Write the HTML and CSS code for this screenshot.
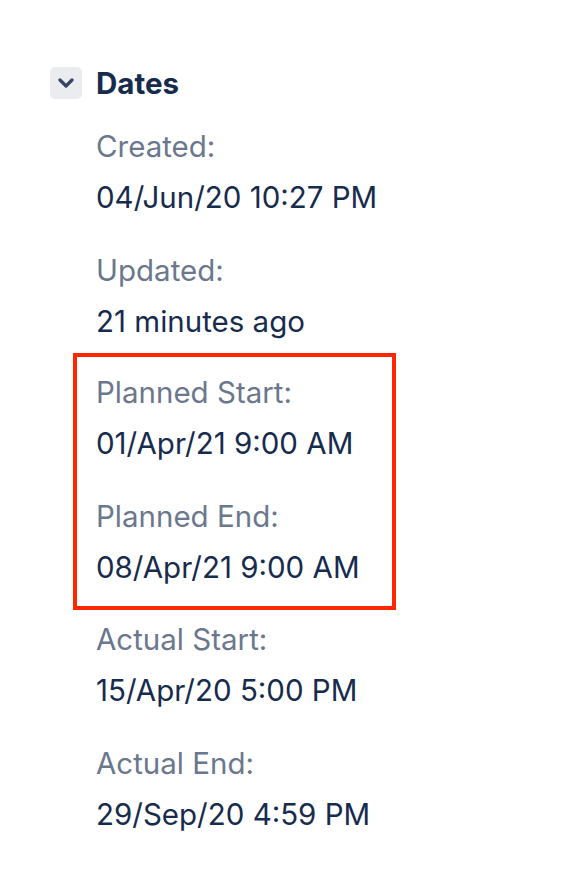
FILE: index.html
```html
<!DOCTYPE html>
<html lang="en">
<head>
  <meta charset="UTF-8" />
  <meta name="viewport" content="width=device-width, initial-scale=1.0"/>
  <title>Dates</title>
  <link rel="stylesheet" href="styles.css">
</head>
<body>
  <div class="panel">
    <div class="panel-header">
      <span class="toggle">
        <svg width="16" height="10" viewBox="0 0 16 10">
          <path d="M2 2 L8 8 L14 2" fill="none" stroke="#344563" stroke-width="3.2" stroke-linecap="round" stroke-linejoin="round"/>
        </svg>
      </span>
      <h2>Dates</h2>
    </div>

    <div class="fields">
      <div class="field">
        <div class="label">Created:</div>
        <div class="value">04/Jun/20 10:27 PM</div>
      </div>
      <div class="field">
        <div class="label">Updated:</div>
        <div class="value">21 minutes ago</div>
      </div>

      <div class="highlight">
        <div class="field">
          <div class="label">Planned Start:</div>
          <div class="value">01/Apr/21 9:00 AM</div>
        </div>
        <div class="field">
          <div class="label">Planned End:</div>
          <div class="value">08/Apr/21 9:00 AM</div>
        </div>
      </div>

      <div class="field">
        <div class="label">Actual Start:</div>
        <div class="value">15/Apr/20 5:00 PM</div>
      </div>
      <div class="field">
        <div class="label">Actual End:</div>
        <div class="value">29/Sep/20 4:59 PM</div>
      </div>
    </div>
  </div>
</body>
</html>
```

FILE: styles.css
```css
body {
  margin: 0;
  background: #ffffff;
  font-family: Inter, "Noto Sans", Arial, sans-serif;
}

.panel {
  padding: 65px 0 0 50px;
}

.panel-header {
  display: flex;
  align-items: center;
  height: 36px;
}

.toggle {
  width: 32px;
  height: 32px;
  border-radius: 5px;
  background-color: #ebecf0;
  display: flex;
  align-items: center;
  justify-content: center;
  margin-right: 14px;
}

.panel-header h2 {
  margin: 0;
  font-size: 29.5px;
  font-weight: 700;
  color: #172b4d;
  line-height: 36px;
}

.fields {
  margin-top: 27px;
  padding-left: 46px;
}

.field + .field {
  margin-top: 37px;
}

.label {
  font-size: 29.5px;
  line-height: 36px;
  color: #6b778c;
  margin-bottom: 15px;
}

.value {
  font-size: 29.5px;
  line-height: 36px;
  color: #172b4d;
}

.highlight {
  width: 323px;
  box-sizing: border-box;
  margin: 14px 0 11px -23px;
  padding: 17px 19px 21px 19px;
  border: 4px solid #ff2600;
}
```
